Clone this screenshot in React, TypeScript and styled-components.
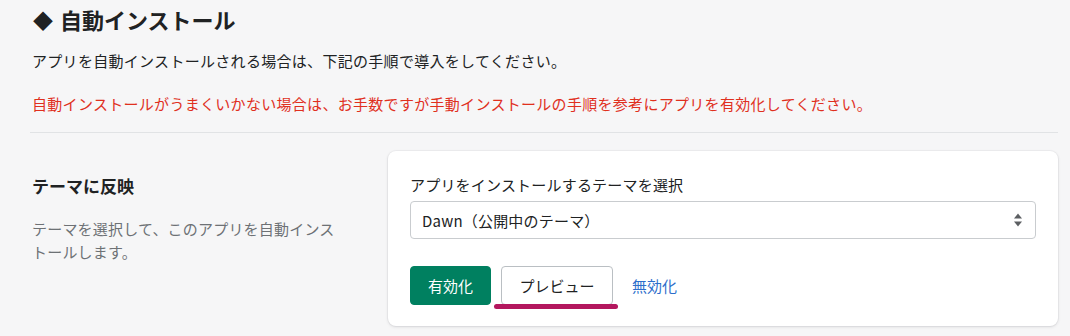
import React from 'react';
import styled, { createGlobalStyle } from 'styled-components';

const GlobalStyle = createGlobalStyle`
  html, body {
    margin: 0;
    padding: 0;
    background: #f6f6f7;
  }
  body {
    font-family: "Noto Sans CJK JP", "Noto Sans", sans-serif;
    color: #202223;
  }
`;

const Page = styled.div`
  width: 1070px;
  height: 336px;
  box-sizing: border-box;
  padding: 3px 12px 0 30px;
  overflow: hidden;
`;

const Title = styled.h2`
  margin: 0;
  font-size: 22px;
  line-height: 32px;
  font-weight: 700;
  display: flex;
  align-items: center;
  gap: 7px;
  padding-left: 3px;
`;

const Diamond = styled.span`
  font-size: 20px;
  line-height: 1;
  margin-top: 3px;
`;

const Note = styled.p<{ $danger?: boolean }>`
  margin: ${(p) => (p.$danger ? '19px' : '14px')} 0 0;
  font-size: 15px;
  line-height: 24px;
  letter-spacing: 0.3px;
  color: ${(p) => (p.$danger ? '#e0301e' : '#202223')};
  padding-left: 2px;
`;

const Divider = styled.hr`
  margin: 16px 0 18px;
  border: 0;
  border-top: 1px solid #e1e3e5;
`;

const Section = styled.div`
  display: grid;
  grid-template-columns: 358px 1fr;
  align-items: start;
`;

const Aside = styled.div`
  padding: 23px 0 0 2px;
`;

const AsideTitle = styled.h3`
  margin: 0;
  font-size: 17px;
  line-height: 24px;
  font-weight: 700;
`;

const AsideText = styled.p`
  margin: 19px 0 0;
  width: 312px;
  font-size: 15px;
  line-height: 23px;
  letter-spacing: 0.2px;
  color: #6d7175;
`;

const Card = styled.div`
  background: #fff;
  border-radius: 8px;
  box-shadow: 0 0 0 1px rgba(63, 63, 68, 0.04), 0 1px 3px rgba(63, 63, 68, 0.15);
  padding: 22px 22px 21px;
`;

const Label = styled.div`
  font-size: 15px;
  line-height: 24px;
  letter-spacing: 0.2px;
`;

const SelectBox = styled.div`
  margin-top: 4px;
  height: 38px;
  box-sizing: border-box;
  border: 1px solid #c9cccf;
  border-radius: 4px;
  display: flex;
  align-items: center;
  justify-content: space-between;
  padding: 0 12px 0 11px;
  font-size: 15px;
  letter-spacing: 0.2px;
`;

const Actions = styled.div`
  margin-top: 27px;
  display: flex;
  align-items: center;
  gap: 10px;
`;

const Button = styled.button<{ $primary?: boolean }>`
  height: 39px;
  box-sizing: border-box;
  border-radius: 4px;
  font-family: inherit;
  font-size: 15px;
  cursor: pointer;
  padding: 0 16px;
  border: 1px solid ${(p) => (p.$primary ? '#008060' : '#babfc3')};
  background: ${(p) => (p.$primary ? '#008060' : '#fff')};
  color: ${(p) => (p.$primary ? '#fff' : '#202223')};
`;

const PrimaryButton = styled(Button)`
  width: 81px;
`;

const Marked = styled.div`
  position: relative;
  display: flex;

  &::after {
    content: '';
    position: absolute;
    left: -7px;
    right: -5px;
    top: 38px;
    height: 5px;
    border-radius: 3px;
    background: #b3175e;
  }
`;

const PreviewButton = styled(Button)`
  width: 112px;
`;

const LinkButton = styled.button`
  margin-left: 9px;
  border: 0;
  background: none;
  padding: 0;
  font-family: inherit;
  font-size: 15px;
  color: #2c6ecb;
  cursor: pointer;
`;

const Arrows = () => (
  <svg width="10" height="16" viewBox="0 0 10 16">
    <path d="M5 1.5 L9 6.5 H1 Z" fill="#5c5f62" />
    <path d="M5 14.5 L9 9.5 H1 Z" fill="#5c5f62" />
  </svg>
);

export default function App() {
  return (
    <>
      <GlobalStyle />
      <Page>
        <Title>
          <Diamond>◆</Diamond>
          自動インストール
        </Title>
        <Note>アプリを自動インストールされる場合は、下記の手順で導入をしてください。</Note>
        <Note $danger>
          自動インストールがうまくいかない場合は、お手数ですが手動インストールの手順を参考にアプリを有効化してください。
        </Note>
        <Divider />
        <Section>
          <Aside>
            <AsideTitle>テーマに反映</AsideTitle>
            <AsideText>テーマを選択して、このアプリを自動インストールします。</AsideText>
          </Aside>
          <Card>
            <Label>アプリをインストールするテーマを選択</Label>
            <SelectBox>
              <span>Dawn（公開中のテーマ）</span>
              <Arrows />
            </SelectBox>
            <Actions>
              <PrimaryButton $primary>有効化</PrimaryButton>
              <Marked>
                <PreviewButton>プレビュー</PreviewButton>
              </Marked>
              <LinkButton>無効化</LinkButton>
            </Actions>
          </Card>
        </Section>
      </Page>
    </>
  );
}
